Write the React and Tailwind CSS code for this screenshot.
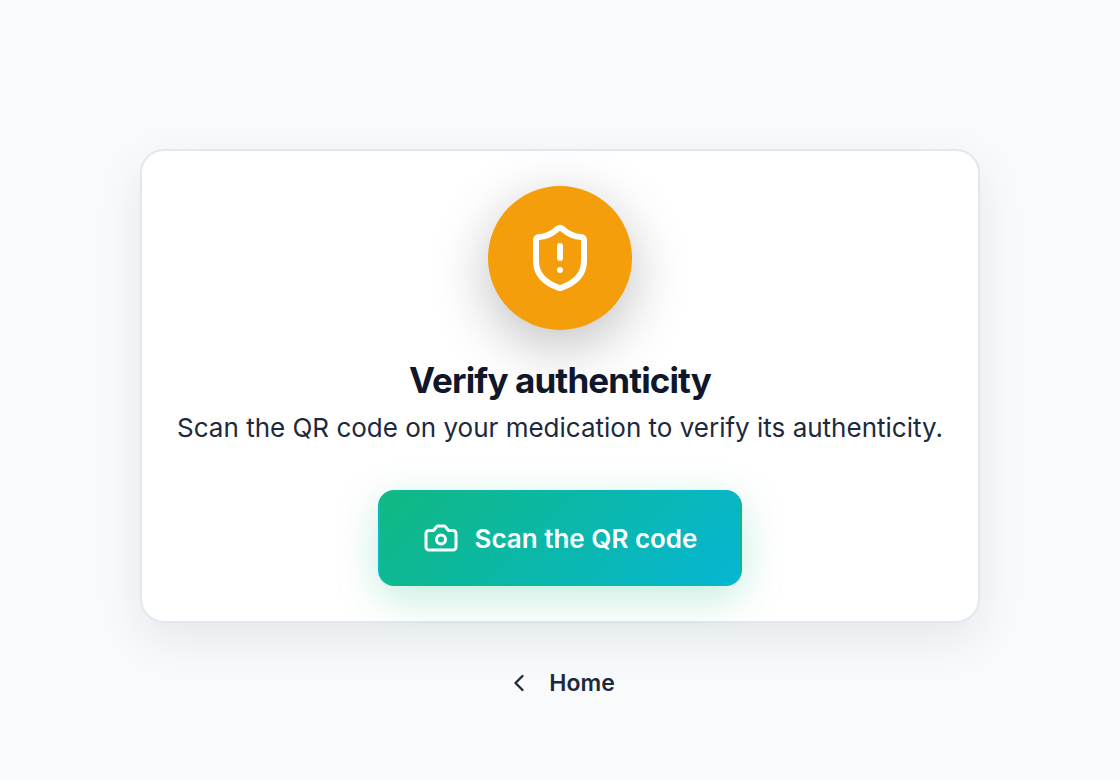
import { ChevronLeft, ShieldAlert } from "lucide-react";

function CameraIcon({ className }) {
  return (
    <svg
      xmlns="http://www.w3.org/2000/svg"
      viewBox="0 0 24 24"
      fill="none"
      stroke="currentColor"
      strokeWidth="2"
      strokeLinecap="round"
      strokeLinejoin="round"
      aria-hidden="true"
      className={className}
    >
      <path d="M14.5 4h-5L7 7H4a2 2 0 0 0-2 2v9a2 2 0 0 0 2 2h16a2 2 0 0 0 2-2V9a2 2 0 0 0-2-2h-3l-2.5-3z" />
      <circle cx="12" cy="13" r="3" />
    </svg>
  );
}

export default function App() {
  return (
    <main className="flex min-h-screen flex-col items-center justify-center bg-slate-50 px-8 pt-20 font-['Inter',sans-serif] text-slate-800">
      <section className="flex w-full max-w-[840px] flex-col items-center rounded-3xl border-2 border-slate-200 bg-white px-8 py-[35px] text-center shadow-[0_16px_48px_rgba(15,23,42,0.08)]">
        <div className="flex size-36 items-center justify-center rounded-full bg-[#f59e0b] text-white shadow-[0_16px_56px_rgba(0,0,0,0.25)]">
          <ShieldAlert className="size-18" strokeWidth={2} />
        </div>

        <h1 className="mt-7 text-[35px] leading-[44px] font-bold tracking-tight text-slate-900">
          Verify authenticity
        </h1>
        <p className="mt-1 text-[26px] leading-[44px]">
          Scan the QR code on your medication to verify its authenticity.
        </p>

        <button
          type="button"
          className="mt-10 flex h-24 items-center gap-4 rounded-2xl border-2 border-transparent bg-[linear-gradient(135deg,#10b981,#06b6d4)] px-[43px] text-[26px] font-semibold text-white shadow-[0_12px_40px_rgba(16,185,129,0.25)]"
        >
          <CameraIcon className="size-9" />
          Scan the QR code
        </button>
      </section>

      <a
        href="#home"
        className="mt-8 flex h-14 items-center gap-4 px-4 text-[23px] font-semibold"
      >
        <ChevronLeft className="size-7" strokeWidth={2} />
        Home
      </a>
    </main>
  );
}
